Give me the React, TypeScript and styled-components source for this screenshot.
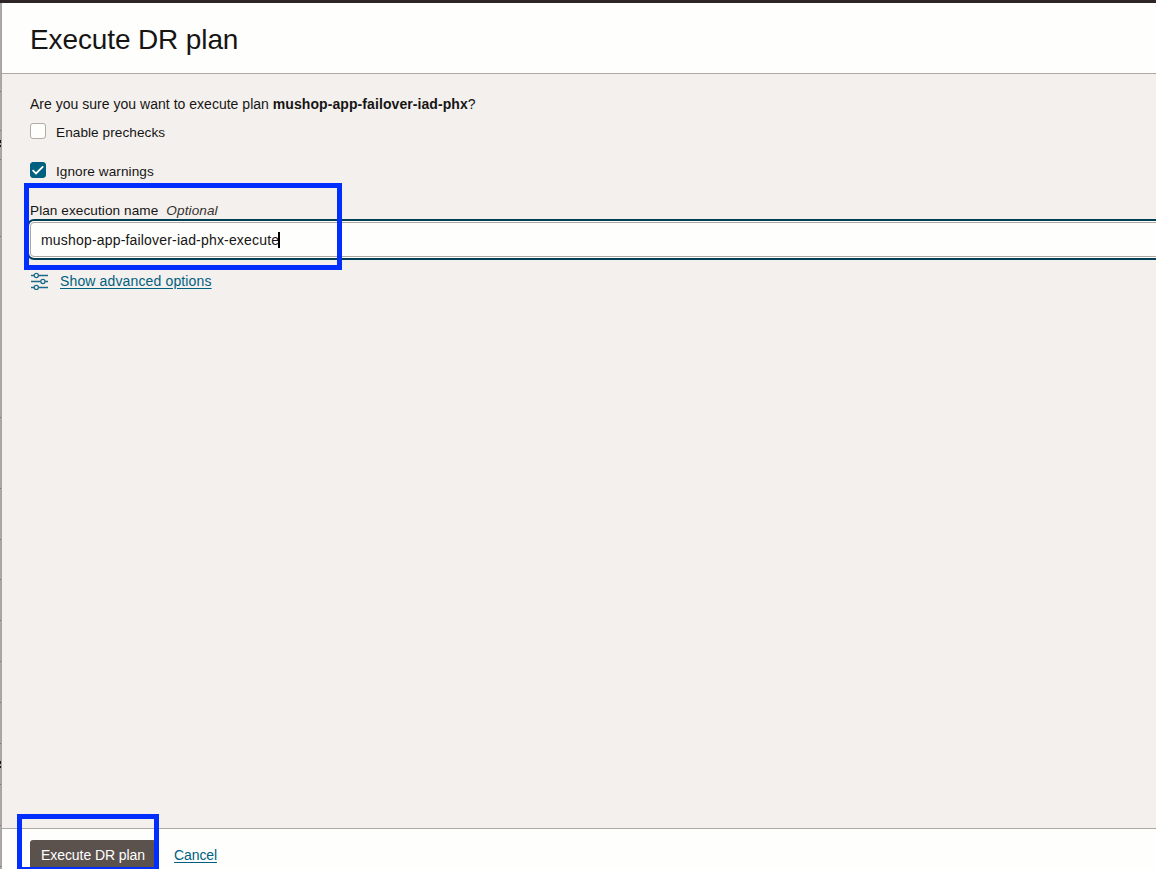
import React from "react";
import styled, { createGlobalStyle } from "styled-components";

const GlobalStyle = createGlobalStyle`
  html, body { margin: 0; padding: 0; overflow: hidden; }
  * { box-sizing: border-box; }
`;

const Page = styled.div`
  position: relative;
  width: 100%;
  height: 869px;
  overflow: hidden;
  display: flex;
  flex-direction: column;
  background: #f4f0ee;
  color: #161513;
  font: 14px/20px "Liberation Sans", Arial, sans-serif;
`;

const TopBar = styled.div`
  flex: none;
  height: 3px;
  background: #2d2526;
`;

const Columns = styled.div`
  flex: 1;
  min-height: 0;
  display: flex;
`;

const Backdrop = styled.div`
  position: relative;
  flex: none;
  width: 2px;
  background: linear-gradient(90deg, #b0abaa, #a49f9e);
`;

const Tick = styled.span<{ $y: number; $size?: number }>`
  position: absolute;
  left: 0;
  top: ${(p) => p.$y - 3}px;
  width: 1px;
  height: ${(p) => p.$size ?? 1}px;
  background: ${(p) => (p.$size ? "#161513" : "#7d7877")};
`;

const Panel = styled.div`
  flex: 1;
  min-width: 0;
  display: flex;
  flex-direction: column;
`;

const Header = styled.header`
  flex: none;
  height: 71px;
  padding: 19px 28px 0;
  background: #fefefd;
  border-bottom: 1px solid #aea8a3;
`;

const Title = styled.h1`
  margin: 0;
  font-size: 28px;
  line-height: 36px;
  font-weight: 400;
  letter-spacing: -0.12px;
`;

const Body = styled.main`
  flex: 1;
  min-height: 0;
  padding: 20px 0 0 28px;
`;

const Text = styled.span<{ $size?: number; $spacing?: number }>`
  font-size: ${(p) => p.$size ?? 14}px;
  letter-spacing: ${(p) => p.$spacing ?? 0}px;
  white-space: nowrap;
`;

const Question = styled.p`
  margin: 0;
  height: 20px;
  white-space: nowrap;
`;

const CheckRow = styled.label`
  display: flex;
  gap: 10px;
  height: 20px;
  margin-top: 19px;

  ${Question} + & { margin-top: 8px; }
  ${Text} { padding-top: 1px; }
`;

const Box = styled.span<{ $checked?: boolean }>`
  flex: none;
  width: 16px;
  height: 16px;
  margin-top: 1px;
  border-radius: 3px;
  border: 1px solid ${(p) => (p.$checked ? "#00607f" : "#b3aba6")};
  background: ${(p) => (p.$checked ? "#00607f" : "#fefefd")};

  svg { display: block; }
`;

const FieldLabel = styled.div`
  display: flex;
  gap: 8px;
  height: 20px;
  margin-top: 20px;

  em { color: #35312f; }
`;

const Field = styled.div`
  display: flex;
  align-items: center;
  height: 35px;
  margin: 1px -20px 0 0;
  padding: 1px 0 0 10px;
  border: 1px solid #aea69f;
  border-radius: 4px;
  background: #fefefd;
  box-shadow: 0 0 0 1px #fefefd, 0 0 0 3px #003f55;
`;

const Caret = styled.span`
  width: 2px;
  height: 16px;
  margin-left: -1px;
  background: #000;
`;

const Options = styled.div`
  display: flex;
  gap: 11px;
  margin-top: 14px;

  svg { flex: none; margin-top: 1px; }
`;

const Link = styled.a`
  color: #00607f;
  text-decoration: underline;
  text-decoration-thickness: 1px;
  text-underline-offset: 2px;
`;

const Footer = styled.footer`
  flex: none;
  display: flex;
  gap: 18px;
  height: 41px;
  padding: 11px 0 0 28px;
  background: #fefefd;
  border-top: 1px solid #aea8a3;
  overflow: hidden;

  ${Link} { padding-top: 5px; }
`;

const Button = styled.button`
  width: 126px;
  height: 32px;
  padding: 0 0 2px 11px;
  border: 0;
  border-radius: 3px;
  background: #5b524e;
  color: #fff;
  font: inherit;
  text-align: left;
`;

const Highlight = styled.div<{ $x: number; $y: number; $w: number; $h: number }>`
  position: absolute;
  left: ${(p) => p.$x}px;
  top: ${(p) => p.$y}px;
  width: ${(p) => p.$w}px;
  height: ${(p) => p.$h}px;
  border: 5px solid #002eff;
  pointer-events: none;
`;

const LowerHighlight = styled(Highlight)`
  border-bottom-width: 2px;
`;

const ticks = [91, 130, 159, 236, 417, 488, 539, 579, 620, 661, 702, 743, 784, 825, 866];

export default function App() {
  return (
    <Page>
      <GlobalStyle />
      <TopBar />
      <Columns>
        <Backdrop>
          {ticks.map((y) => <Tick key={y} $y={y} />)}
          <Tick $y={140} $size={3} />
          <Tick $y={145} $size={2} />
          <Tick $y={761} $size={3} />
          <Tick $y={766} $size={2} />
        </Backdrop>
        <Panel>
          <Header><Title>Execute DR plan</Title></Header>
          <Body>
            <Question>
              <Text $spacing={0.02}>Are you sure you want to execute plan </Text>
              <Text as="strong" $spacing={0.08}>mushop-app-failover-iad-phx</Text>
              <Text>?</Text>
            </Question>
            <CheckRow>
              <Box />
              <Text $size={13.6} $spacing={0.07}>Enable prechecks</Text>
            </CheckRow>
            <CheckRow>
              <Box $checked>
                <svg width="14" height="14" viewBox="0 0 14 14" fill="none" stroke="#fff" strokeWidth="1.8">
                  <path d="M1.6 7.2 5 10.5 12.2 3.3" />
                </svg>
              </Box>
              <Text $size={13.6} $spacing={0.07}>Ignore warnings</Text>
            </CheckRow>
            <FieldLabel>
              <Text $size={13.6} $spacing={0.07}>Plan execution name</Text>
              <Text as="em" $size={13.6} $spacing={0.1}>Optional</Text>
            </FieldLabel>
            <Field>
              <Text $spacing={0.18}>mushop-app-failover-iad-phx-execute</Text>
              <Caret />
            </Field>
            <Options>
              <svg width="19" height="18" viewBox="0 0 19 18" fill="none" stroke="#1b6b88" strokeWidth="1.3">
                <path d="M1 3.5h3M8.6 3.5H18M1 9.5h9.6M15.2 9.5H18M1 15.5h3M8.6 15.5H18" />
                <circle cx="6.3" cy="3.5" r="2.1" />
                <circle cx="12.9" cy="9.5" r="2.1" />
                <circle cx="6.3" cy="15.5" r="2.1" />
              </svg>
              <Link><Text $spacing={0.14}>Show advanced options</Text></Link>
            </Options>
          </Body>
          <Footer>
            <Button><Text $spacing={-0.07}>Execute DR plan</Text></Button>
            <Link><Text $spacing={-0.1}>Cancel</Text></Link>
          </Footer>
        </Panel>
      </Columns>
      <Highlight $x={24} $y={183} $w={318} $h={87} />
      <LowerHighlight $x={17} $y={814} $w={142} $h={55} />
    </Page>
  );
}
